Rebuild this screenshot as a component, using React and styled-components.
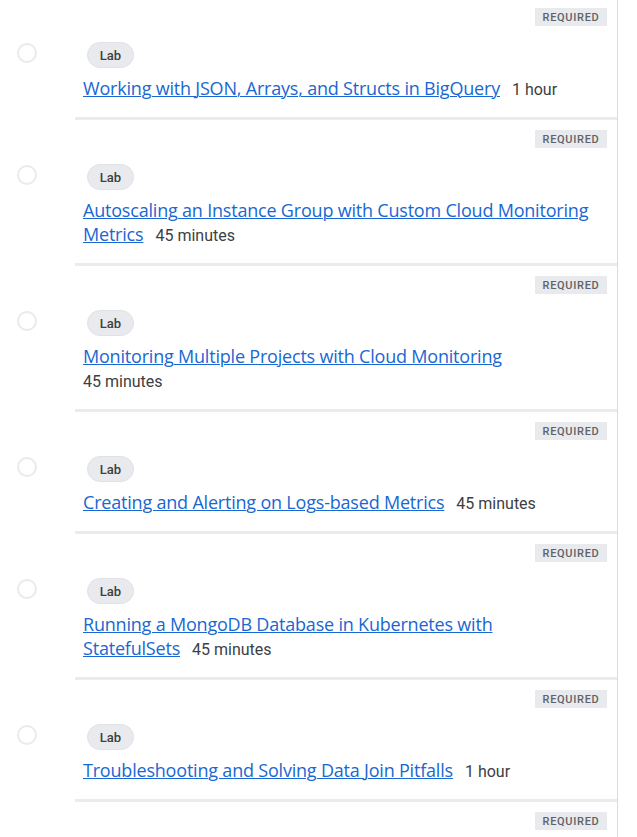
import React from "react";
import styled, { createGlobalStyle } from "styled-components";

const GlobalStyle = createGlobalStyle`
  html, body {
    margin: 0;
    padding: 0;
    background: #ffffff;
    overflow: hidden;
  }
  body {
    font-family: Roboto, "Liberation Sans", Arial, sans-serif;
  }
`;

const List = styled.ul`
  list-style: none;
  margin: -2px 0 0 0;
  padding: 0;
  width: 617px;
  min-height: 900px;
  border-right: 1px solid #dadce0;
`;

const Item = styled.li`
  display: grid;
  grid-template-columns: 75px 1fr;
`;

const StatusCell = styled.div`
  padding: 45px 0 0 17px;
`;

const StatusCircle = styled.span`
  display: block;
  box-sizing: border-box;
  width: 20px;
  height: 20px;
  border-radius: 50%;
  border: 2px solid #e8eaed;
`;

const Body = styled.div`
  display: flex;
  flex-direction: column;
  align-items: flex-start;
  padding: 10px 10px 17px 8px;
  border-bottom: 3px solid #ebebeb;
`;

const BadgeRow = styled.div`
  align-self: stretch;
  display: flex;
  justify-content: flex-end;
`;

const Required = styled.span`
  display: inline-flex;
  align-items: center;
  justify-content: center;
  box-sizing: border-box;
  width: 72px;
  height: 18px;
  background: #e8eaed;
  color: #5f6368;
  font-family: Roboto, "Liberation Sans", sans-serif;
  font-size: 11px;
  font-weight: 500;
  letter-spacing: 0.7px;
  text-transform: uppercase;
`;

const TypeChip = styled.span`
  margin: 16px 0 0 4px;
  display: inline-flex;
  align-items: center;
  justify-content: center;
  box-sizing: border-box;
  width: 47px;
  height: 26px;
  border-radius: 13px;
  background: #e8eaed;
  border: 1px solid #e0e2e6;
  color: #3c4043;
  font-family: Roboto, "Liberation Sans", sans-serif;
  font-size: 13px;
  font-weight: 500;
`;

const TitleBlock = styled.div`
  margin: 8px 0 0 0;
  max-width: 508px;
  font-family: "Open Sans", Roboto, sans-serif;
  font-size: 18px;
  line-height: 24px;
  letter-spacing: -0.2px;
`;

const TitleLink = styled.a`
  color: #1967d2;
  text-decoration: underline;
  text-decoration-thickness: 1px;
  margin-right: 12px;
`;

const Duration = styled.span`
  display: inline-block;
  white-space: nowrap;
  color: #3c4043;
  font-family: Roboto, "Liberation Sans", sans-serif;
  font-size: 16px;
  line-height: 16px;
  letter-spacing: 0;
`;

const labs = [
  { title: "Working with JSON, Arrays, and Structs in BigQuery", duration: "1 hour" },
  { title: "Autoscaling an Instance Group with Custom Cloud Monitoring Metrics", duration: "45 minutes" },
  { title: "Monitoring Multiple Projects with Cloud Monitoring", duration: "45 minutes" },
  { title: "Creating and Alerting on Logs-based Metrics", duration: "45 minutes" },
  { title: "Running a MongoDB Database in Kubernetes with StatefulSets", duration: "45 minutes" },
  { title: "Troubleshooting and Solving Data Join Pitfalls", duration: "1 hour" },
  { title: "Managing Deployments Using Kubernetes Engine", duration: "1 hour" },
];

export default function App() {
  return (
    <>
      <GlobalStyle />
      <List>
        {labs.map((lab) => (
          <Item key={lab.title}>
            <StatusCell>
              <StatusCircle />
            </StatusCell>
            <Body>
              <BadgeRow>
                <Required>Required</Required>
              </BadgeRow>
              <TypeChip>Lab</TypeChip>
              <TitleBlock>
                <TitleLink href="#">{lab.title}</TitleLink>
                <Duration>{lab.duration}</Duration>
              </TitleBlock>
            </Body>
          </Item>
        ))}
      </List>
    </>
  );
}
